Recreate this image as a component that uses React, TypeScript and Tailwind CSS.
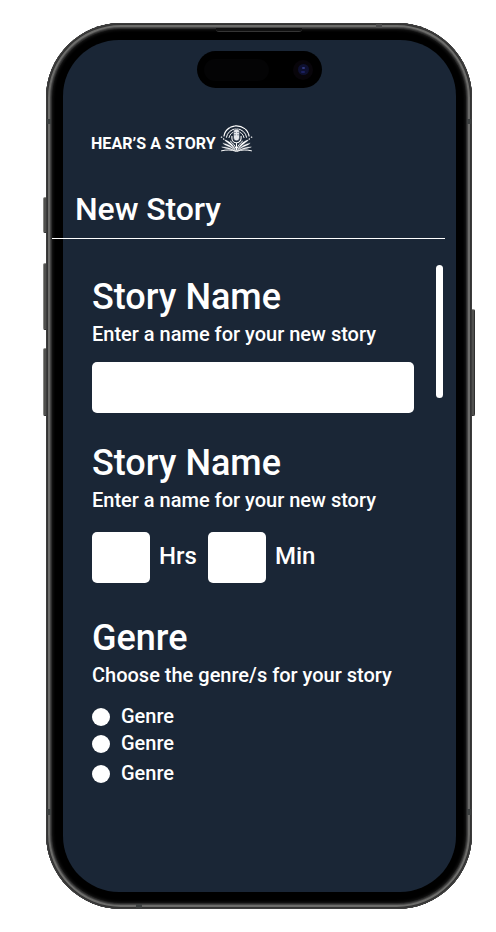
import React from "react";

function StoryLogo() {
  return (
    <svg className="-mt-[4px] ml-[4px] h-[30px] w-[34px] shrink-0" viewBox="0 0 34 30" fill="none" stroke="#fff" strokeLinecap="round">
      <path d="M4 13A12.600 11.600 0 0 1 29 13" strokeWidth="1.2" strokeDasharray="10 1.200 4 1" />
      <path d="M6.400 14.300A10.200 9.800 0 0 1 26.600 14.300" strokeWidth="1" />
      <path d="M9 14.600A7.700 7.700 0 0 1 24 14.600" strokeWidth=".9" />
      <path d="M1.400 14.200h.3M31.400 14.200h.3M3.500 16h.2M29.300 16h.2" strokeWidth="1.300" />
      <rect x="13.500" y="5.800" width="6" height="12" rx="3" fill="#e4e7eb" stroke="#1a2636" strokeWidth=".5" />
      <path d="M14.200 9.500h1.400M14.200 11.800h1.400M17.400 9.500h1.400M17.400 11.800h1.400" stroke="#566273" strokeWidth=".6" />
      <path d="M11.900 13.200v2a4.600 4.600 0 0 0 9.200 0v-2M16.500 19.800v7.500" strokeWidth="1.100" />
      <path d="M15.500 27C14 22.500 9.500 18 4.500 16.800c1 2.200 6.500 4.200 11 10.200ZM15.500 27.500C11.500 23 7 20.500 2.800 20.200c1.700 2.300 8 3.300 12.700 7.300ZM15.500 28C11 25 6 23.700 1.600 23.900c3.400 1.700 9 1.600 13.900 4.100Z" fill="#fff" strokeWidth=".3" />
      <path d="M17.500 27C19 22.500 23.500 18 28.500 16.800c-1 2.200-6.500 4.200-11 10.200ZM17.500 27.500c4-4.500 8.500-7 12.700-7.300-1.700 2.300-8 3.300-12.700 7.300ZM17.500 28c4.500-3 9.500-4.300 13.900-4.100-3.400 1.700-9 1.600-13.900 4.100Z" fill="#fff" strokeWidth=".3" />
      <path d="M10.500 18.200c2.500 2 4.500 4.500 5.300 7M22.500 18.200c-2.500 2-4.500 4.500-5.300 7M1.500 27.800c5-1.300 10-1.100 15 .6 5-1.700 10-1.900 15-.6" strokeWidth="1" />
    </svg>
  );
}

function SectionHeading({ title, hint }: { title: string; hint: string }) {
  return (
    <>
      <h2 className="text-[36px] leading-[40px]">{title}</h2>
      <p className="mt-[5px] text-[20px] leading-6">{hint}</p>
    </>
  );
}

function Duration({ unit }: { unit: string }) {
  return (
    <label className="flex items-center">
      <span className="h-[51px] w-[58px] rounded-[5px] bg-white" />
      <span className="ml-[9px] w-[49px] pb-[3px] text-[24px] leading-7">{unit}</span>
    </label>
  );
}

function GenreOption() {
  return (
    <label className="flex h-[18px] items-center">
      <span className="size-[18px] rounded-full bg-white" />
      <span className="ml-[11px] pb-[2px] text-[20px] leading-[20px]">Genre</span>
    </label>
  );
}

function DynamicIsland() {
  return (
    <div className="mx-auto flex h-[37px] w-[125px] items-center justify-between rounded-full bg-black pr-[9px] pl-[7px]">
      <span className="h-[22px] w-[65px] rounded-full bg-[#040405]" />
      <span className="flex size-[20px] items-center justify-center rounded-full bg-[#08050a]">
        <span className="flex size-[11px] flex-col items-center justify-center gap-[2px] rounded-full bg-[#0e1030]">
          <span className="h-[2px] w-[3px] rounded-full bg-[#31377b]" />
          <span className="h-[2px] w-[4px] rounded-full bg-[#1b2060]" />
        </span>
      </span>
    </div>
  );
}

const sideButton = "absolute w-[4px] border border-[#303030] border-l-[#858582] border-t-[#8d8d8a] bg-[#50504e]";

export default function App() {
  return (
    <main className="flex h-[932px] w-[496px] overflow-hidden bg-white pt-[23px] pl-[46px] font-[Roboto,sans-serif] font-medium text-white">
      <div className="relative h-[886px] w-[426px]">
        <i className={sideButton + " top-[174px] -left-[3px] h-[36px] rounded-l-[2px]"} />
        <i className={sideButton + " top-[240px] -left-[3px] h-[67px] rounded-l-[2px]"} />
        <i className={sideButton + " top-[325px] -left-[3px] h-[68px] rounded-l-[2px]"} />
        <i className={sideButton + " top-[286px] -right-[3px] h-[107px] rounded-r-[2px]"} />
        <div className="relative h-full rounded-[75px] bg-black p-[17px] shadow-[inset_0_0_0_1px_#3c3c3c,inset_0_0_0_2px_#333333,inset_0_0_0_4px_#6c6c6a,inset_0_0_0_5px_#454545,inset_0_0_0_6px_#2b2b2b,inset_0_0_3px_7px_#191919]">
          <i className="absolute top-[96px] left-px h-[5px] w-[4px] bg-[#3d4040]" />
          <i className="absolute top-[96px] right-px h-[5px] w-[4px] bg-[#3d4040]" />
          <i className="absolute top-[786px] left-px h-[6px] w-[4px] bg-[#3d4040]" />
          <i className="absolute top-[786px] right-px h-[6px] w-[4px] bg-[#3d4040]" />
          <i className="absolute top-px left-[330px] h-[4px] w-[6px] bg-[#4d4d4d]" />
          <i className="absolute bottom-px left-[90px] h-[4px] w-[6px] bg-[#3d4040]" />
          <i className="absolute top-[5px] left-[170px] h-[4px] w-[86px] rounded-b-[3px] border-b border-[#343434] bg-[#111]" />
          <div className="h-[852px] w-[393px] rounded-[56px] bg-[#1a2636] pt-[11px]">
            <DynamicIsland />
            <header className="mt-[37px] ml-[28px] flex h-[30px] items-center">
              <span className="w-[125px] pt-[8px] text-[16px] leading-5 font-bold tracking-[0.06px] whitespace-nowrap">HEAR’S A STORY</span>
              <StoryLogo />
            </header>
            <h1 className="mt-[34px] ml-[12px] text-[32px] leading-[40px] tracking-[-0.08px]">New Story</h1>
            <div className="relative mt-[9px] -ml-[11px] h-px w-[393px] bg-white" />
            <div className="mt-[26px] flex justify-between pr-[13px] pl-[29px]">
              <form className="w-[322px] pt-[12px]">
                <section>
                  <SectionHeading title="Story Name" hint="Enter a name for your new story" />
                  <div className="mt-[16px] h-[51px] rounded-[5px] bg-white" />
                </section>
                <section className="mt-[30px]">
                  <SectionHeading title="Story Name" hint="Enter a name for your new story" />
                  <div className="mt-[20px] flex">
                    <Duration unit="Hrs" />
                    <Duration unit="Min" />
                  </div>
                </section>
                <section className="mt-[35px]">
                  <SectionHeading title="Genre" hint="Choose the genre/s for your story" />
                  <div className="mt-[21px]">
                    <GenreOption />
                    <div className="mt-[9px]"><GenreOption /></div>
                    <div className="mt-[12px]"><GenreOption /></div>
                  </div>
                </section>
              </form>
              <div className="h-[133px] w-[7px] rounded-full bg-white" />
            </div>
          </div>
        </div>
      </div>
    </main>
  );
}
